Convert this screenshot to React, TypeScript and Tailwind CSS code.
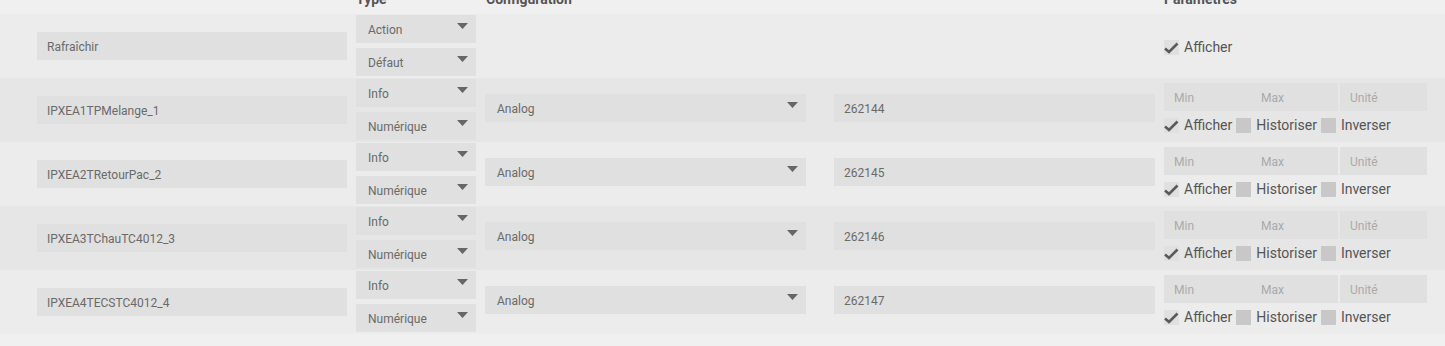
import React from "react";

type Cmd = {
  name: string;
  type: string;
  subType: string;
  config?: string;
  value?: string;
  info: boolean;
};

const cmds: Cmd[] = [
  { name: "Rafraîchir", type: "Action", subType: "Défaut", info: false },
  { name: "IPXEA1TPMelange_1", type: "Info", subType: "Numérique", config: "Analog", value: "262144", info: true },
  { name: "IPXEA2TRetourPac_2", type: "Info", subType: "Numérique", config: "Analog", value: "262145", info: true },
  { name: "IPXEA3TChauTC4012_3", type: "Info", subType: "Numérique", config: "Analog", value: "262146", info: true },
  { name: "IPXEA4TECSTC4012_4", type: "Info", subType: "Numérique", config: "Analog", value: "262147", info: true },
];

function Caret() {
  return (
    <svg className="absolute right-[8px] top-[8px]" width="11" height="6" viewBox="0 0 11 6">
      <path d="M0 0 L11 0 L5.5 6 Z" fill="#666666" />
    </svg>
  );
}

function Select({ label, className }: { label: string; className: string }) {
  return (
    <div className={`relative h-[28px] bg-[#e0e0e0] pl-3 pt-[2px] text-[12px] leading-[26px] text-[#6a6a6a] ${className}`}>
      {label}
      <Caret />
    </div>
  );
}

function Check({ checked, label }: { checked: boolean; label: string }) {
  return (
    <label className="flex items-center">
      <span className={`flex h-[15px] w-[15px] items-center justify-center ${checked ? "bg-[#e0e0e0]" : "bg-[#c8c8c8]"}`}>
        {checked && (
          <svg width="15" height="15" viewBox="0 0 15 15">
            <path d="M1 8.5 L5 12 L13.5 3.5" fill="none" stroke="#5a5a5a" strokeWidth="2.6" />
          </svg>
        )}
      </span>
      <span className="ml-[5px] mr-[4px] text-[14px] text-[#555]">{label}</span>
    </label>
  );
}

export default function App() {
  return (
    <div className="min-h-[346px] overflow-hidden bg-[#f0f0f0] font-['Roboto',sans-serif]">
      {/* header, mostly scrolled off */}
      <div className="-mt-[11px] flex h-[25px] pl-[356px] text-[14px] font-bold leading-5 text-[#555]">
        <span className="w-[130px]">Type</span>
        <span className="w-[678px]">Configuration</span>
        <span>Paramètres</span>
      </div>

      {cmds.map((c, i) => (
        <div
          key={c.name}
          className={`flex h-16 items-start pl-[37px] ${i % 2 === 0 ? "bg-[#ececec]" : "bg-[#e6e6e6]"}`}
        >
          <div className="mt-[18px] h-[28px] w-[310px] bg-[#e0e0e0] pl-[10px] pt-[2px] text-[12px] leading-[26px] text-[#6a6a6a]">
            {c.name}
          </div>
          <div className="ml-[9px] mt-[1px] flex w-[120px] flex-col gap-[5px]">
            <Select label={c.type} className="w-[120px]" />
            <Select label={c.subType} className="w-[120px]" />
          </div>
          <div className="ml-[9px] mt-4 w-[321px]">
            {c.config && <Select label={c.config} className="w-[321px]" />}
          </div>
          <div className="ml-[28px] mt-4 w-[321px]">
            {c.value && (
              <div className="h-[28px] bg-[#e0e0e0] pl-[10px] pt-[2px] text-[12px] leading-[26px] text-[#6a6a6a]">{c.value}</div>
            )}
          </div>
          <div className={`ml-[9px] w-[263px] ${c.info ? "mt-[5px]" : "mt-[23px]"}`}>
            {c.info && (
              <div className="flex text-[12px] leading-[26px] text-[#aaa]">
                <div className="h-[28px] w-[87px] bg-[#e0e0e0] pl-[10px] pt-[2px]">Min</div>
                <div className="h-[28px] w-[87px] bg-[#e0e0e0] pl-[10px] pt-[2px]">Max</div>
                <div className="ml-[2px] h-[28px] w-[87px] bg-[#e0e0e0] pl-[10px] pt-[2px]">Unité</div>
              </div>
            )}
            <div className={`flex items-center ${c.info ? "mt-[4px]" : ""}`}>
              <Check checked label="Afficher" />
              {c.info && <Check checked={false} label="Historiser" />}
              {c.info && <Check checked={false} label="Inverser" />}
            </div>
          </div>
        </div>
      ))}
    </div>
  );
}
